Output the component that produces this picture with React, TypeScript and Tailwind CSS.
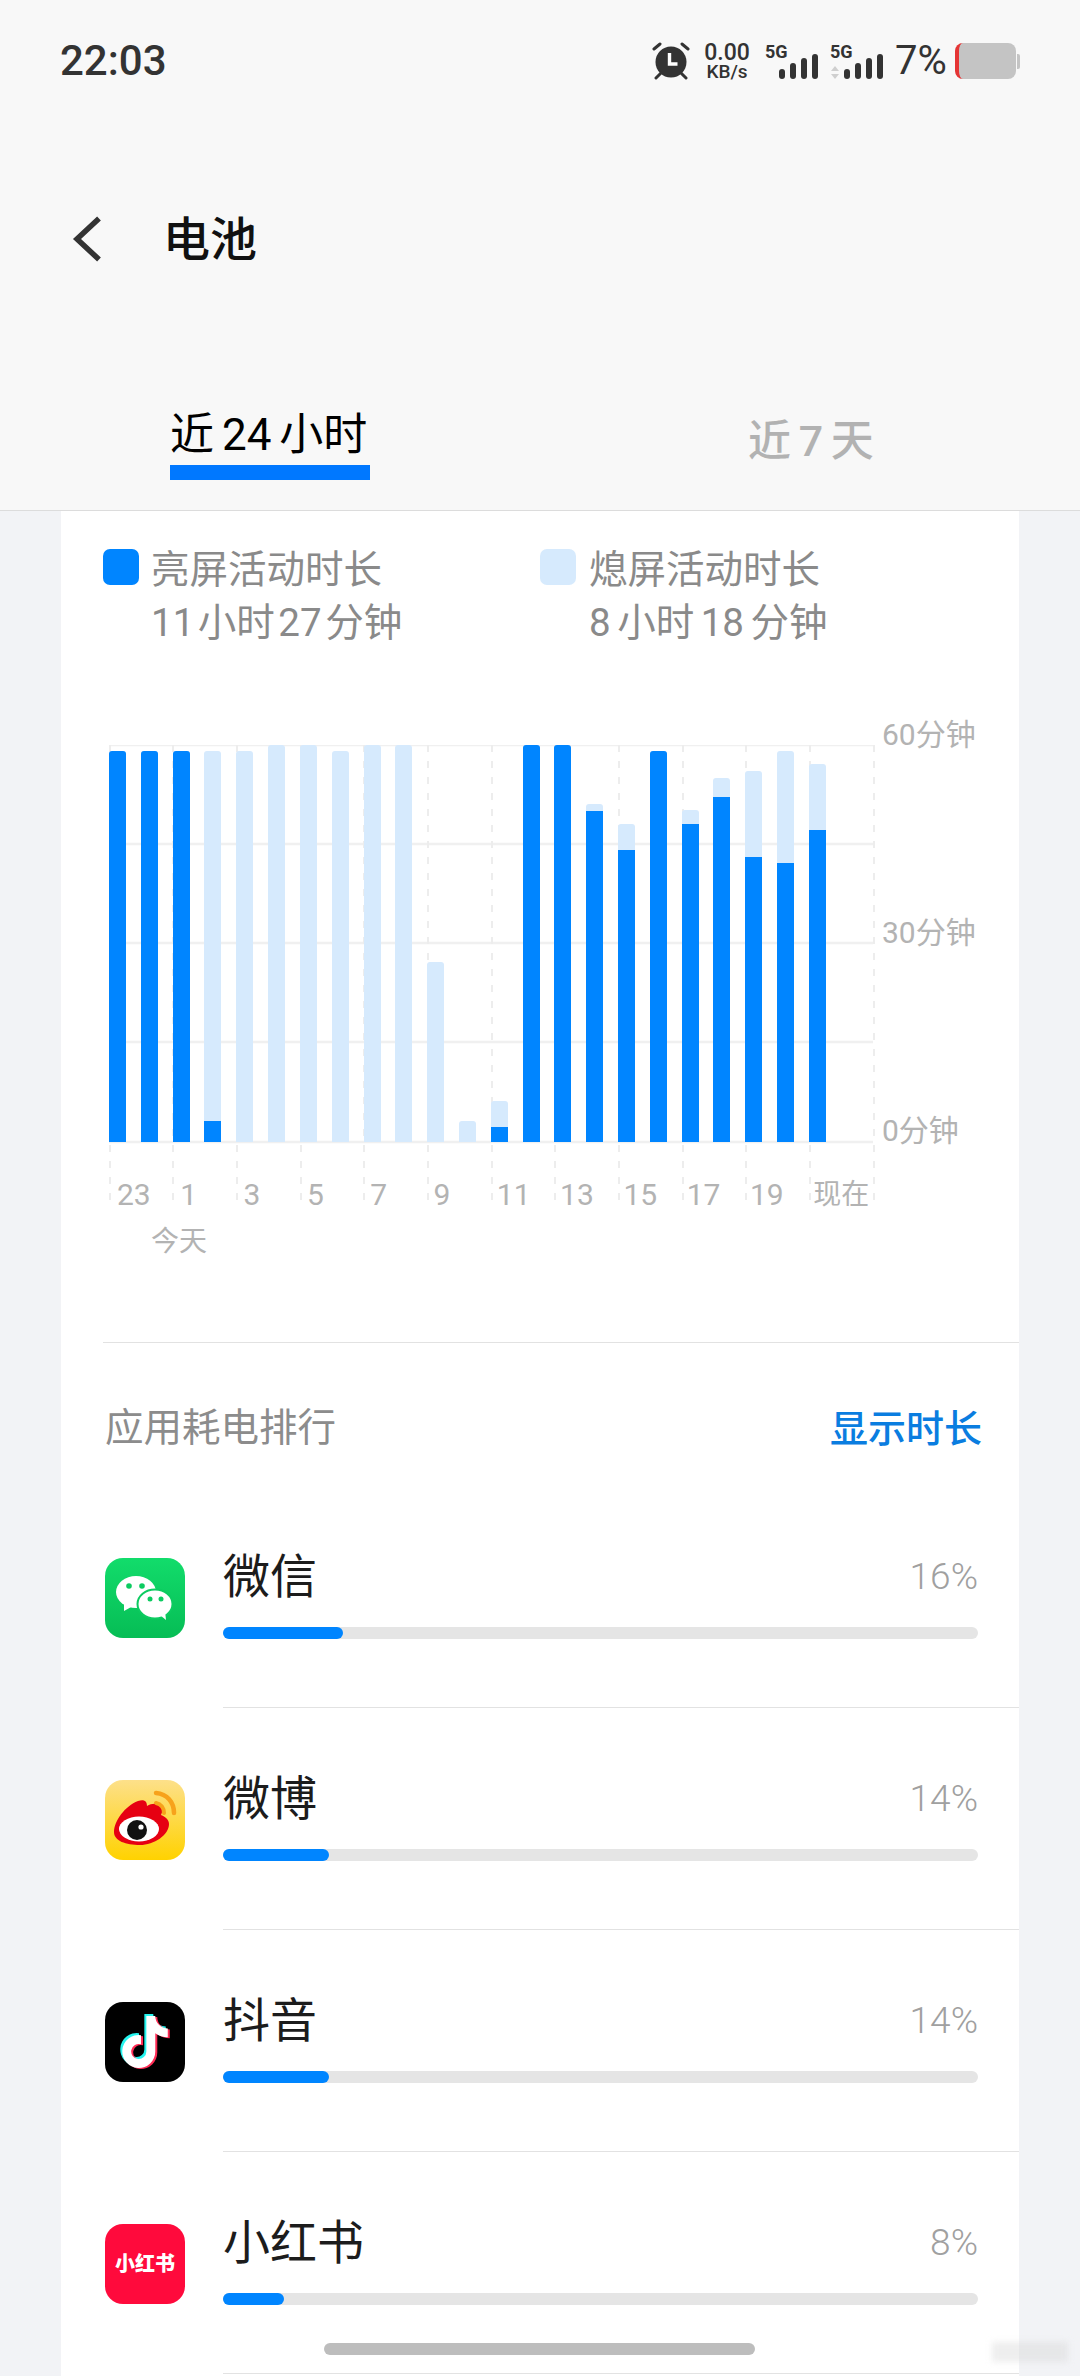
import { FaTiktok } from "react-icons/fa";

const BASE = 1142;

const bars = [
  { blue: 751, light: 751 },
  { blue: 751, light: 751 },
  { blue: 751, light: 751 },
  { blue: 1121, light: 751 },
  { blue: 1142, light: 751 },
  { blue: 1142, light: 745 },
  { blue: 1142, light: 745 },
  { blue: 1142, light: 751 },
  { blue: 1142, light: 745 },
  { blue: 1142, light: 745 },
  { blue: 1142, light: 962 },
  { blue: 1142, light: 1121 },
  { blue: 1127, light: 1101 },
  { blue: 745, light: 745 },
  { blue: 745, light: 745 },
  { blue: 811, light: 804 },
  { blue: 850, light: 824 },
  { blue: 751, light: 751 },
  { blue: 824, light: 810 },
  { blue: 797, light: 778 },
  { blue: 857, light: 771 },
  { blue: 863, light: 751 },
  { blue: 830, light: 764 },
];

const ticks = [109, 172, 236, 300, 363, 427, 491, 554, 618, 682, 745, 809, 873];
const xLabels = ["23", "1", "3", "5", "7", "9", "11", "13", "15", "17", "19"];
const yLabels = ["60分钟", "30分钟", "0分钟"];

const apps = [
  { name: "微信", pct: "16%", fill: 120, icon: <WechatIcon /> },
  { name: "微博", pct: "14%", fill: 106, icon: <WeiboIcon /> },
  { name: "抖音", pct: "14%", fill: 106, icon: <DouyinIcon /> },
  { name: "小红书", pct: "8%", fill: 61, icon: <RedbookIcon /> },
];

function WechatIcon() {
  return (
    <svg viewBox="0 0 80 80" className="w-20 h-20">
      <defs>
        <linearGradient id="wx" x1="0" y1="0" x2="0" y2="1">
          <stop offset="0" stopColor="#12dc6b" />
          <stop offset="1" stopColor="#06bd55" />
        </linearGradient>
      </defs>
      <rect width="80" height="80" rx="18" fill="url(#wx)" />
      <ellipse cx="31" cy="34" rx="20" ry="16" fill="#fff" />
      <path d="M19 44l0 9 9-5z" fill="#fff" />
      <ellipse cx="50" cy="46" rx="17.5" ry="14.5" fill="#fff" stroke="#0ccb60" strokeWidth="2" />
      <path d="M55 57l6 5-1-9z" fill="#fff" />
      <circle cx="24" cy="28" r="2.8" fill="#0ccb60" />
      <circle cx="37" cy="28" r="2.8" fill="#0ccb60" />
      <circle cx="45" cy="41" r="2.5" fill="#0ccb60" />
      <circle cx="56" cy="41" r="2.5" fill="#0ccb60" />
    </svg>
  );
}

function WeiboIcon() {
  return (
    <svg viewBox="0 0 80 80" className="w-20 h-20">
      <defs>
        <linearGradient id="wb" x1="0" y1="0" x2="0" y2="1">
          <stop offset="0" stopColor="#fde08a" />
          <stop offset="1" stopColor="#ffd200" />
        </linearGradient>
      </defs>
      <rect width="80" height="80" rx="18" fill="url(#wb)" />
      <path d="M9 52c0-11 11-26 24-31 6-2 9 0 9 5 5-3 12-3 14 1 2 3 1 6 0 8 5 2 8 5 8 9 0 11-15 21-29 21C21 65 9 61 9 52z" fill="#e60012" />
      <ellipse cx="34" cy="49" rx="20" ry="12.5" fill="#fff" />
      <circle cx="32" cy="50" r="10" fill="#111" />
      <circle cx="36" cy="47" r="2.6" fill="#fff" />
      <path d="M51 13c11 1 18 9 18 20" stroke="#f7a21b" strokeWidth="4.5" fill="none" strokeLinecap="round" />
      <path d="M51 23c5 1 8 5 8 10" stroke="#f7a21b" strokeWidth="4" fill="none" strokeLinecap="round" />
    </svg>
  );
}

function DouyinIcon() {
  return (
    <div className="relative w-20 h-20 rounded-[18px] bg-black">
      <FaTiktok className="absolute left-[15px] top-[12px] w-[46px] h-[52px] text-[#25f4ee]" />
      <FaTiktok className="absolute left-[19px] top-[15px] w-[46px] h-[52px] text-[#fe2c55]" />
      <FaTiktok className="absolute left-[17px] top-[13.5px] w-[46px] h-[52px] text-white" />
    </div>
  );
}

function RedbookIcon() {
  return (
    <div className="w-20 h-20 rounded-[18px] bg-[#ff0a3c] flex items-center justify-center">
      <span className="text-[20px] leading-none font-black text-white">小红书</span>
    </div>
  );
}

function AlarmIcon() {
  return (
    <svg viewBox="0 0 38 38" className="w-[38px] h-[38px]">
      <circle cx="19" cy="20" r="15.5" fill="#333" />
      <path d="M17.5 11v11h8" stroke="#fff" strokeWidth="3.4" fill="none" />
      <path d="M2 7l6-5M36 7l-6-5" stroke="#333" strokeWidth="3" strokeLinecap="round" />
      <path d="M4 36l5-5M34 36l-5-5" stroke="#333" strokeWidth="3" strokeLinecap="round" />
    </svg>
  );
}

function Signal() {
  return (
    <div className="flex items-end gap-[5px] h-[25px]">
      <div className="w-[6px] h-[10px] rounded-[3px] bg-[#333]" />
      <div className="w-[6px] h-[16px] rounded-[3px] bg-[#333]" />
      <div className="w-[6px] h-[21px] rounded-[3px] bg-[#333]" />
      <div className="w-[6px] h-[25px] rounded-[3px] bg-[#333]" />
    </div>
  );
}

function StatusBar() {
  return (
    <div className="h-[122px] pl-[60px] pr-[60px] flex items-center justify-between text-[#333]">
      <span className="text-[42px] leading-none font-medium">22:03</span>
      <div className="flex items-center h-[38px]">
        <AlarmIcon />
        <div className="ml-[13px] w-[48px] flex flex-col items-center font-medium">
          <span className="text-[23px] leading-[21px]">0.00</span>
          <span className="text-[19px] leading-[17px]">KB/s</span>
        </div>
        <div className="ml-[14px] relative w-[54px] h-[36px]">
          <span className="absolute left-0 top-0 text-[18px] leading-none font-bold">5G</span>
          <div className="absolute left-[14px] bottom-0">
            <Signal />
          </div>
        </div>
        <div className="ml-[11px] relative w-[53px] h-[36px]">
          <span className="absolute left-0 top-0 text-[18px] leading-none font-bold">5G</span>
          <svg viewBox="0 0 8 13" className="absolute left-[1px] bottom-0 w-[8px] h-[13px]">
            <path d="M4 0l4 5H0zM4 13L0 8h8z" fill="#cfcfcf" />
          </svg>
          <div className="absolute left-[14px] bottom-0">
            <Signal />
          </div>
        </div>
        <span className="ml-[12px] w-[51px] text-[40px] leading-none">7%</span>
        <div className="ml-[9px] flex items-center">
          <div className="w-[61px] h-[36px] rounded-[8px] bg-[#c4c4c4] border-l-[4px] border-[#e53535]" />
          <div className="ml-px w-[3px] h-[15px] rounded-r-[2px] bg-[#c4c4c4]" />
        </div>
      </div>
    </div>
  );
}

function Header() {
  return (
    <div className="h-[511px] shrink-0 bg-[#f8f8f8] border-b border-[#dcdcdc] flex flex-col">
      <StatusBar />
      <div className="mt-[93px] h-[48px] pl-[72px] flex items-center">
        <svg viewBox="0 0 30 46" className="w-[30px] h-[46px]">
          <path d="M27 2.5L5 23l22 20.5" stroke="#333" strokeWidth="5.5" fill="none" />
        </svg>
        <span className="ml-[61px] text-[47px] leading-none font-medium text-[#111]">电池</span>
      </div>
      <div className="mt-[148px] flex items-start">
        <div className="ml-[170px] w-[200px] flex flex-col">
          <span className="text-[44px] leading-[48px] text-black whitespace-nowrap [word-spacing:-3px]">近 24 小时</span>
          <div className="mt-[6px] h-[15px] bg-[#0078ff]" />
        </div>
        <span className="ml-[378px] mt-[6px] text-[43px] leading-[48px] font-medium text-[#b2b2b2] whitespace-nowrap [word-spacing:-3px]">近 7 天</span>
      </div>
    </div>
  );
}

function Legend() {
  return (
    <div className="pt-[38px] pl-[42px] flex">
      <div className="w-[437px] flex">
        <div className="w-[36px] h-[36px] rounded-[7px] bg-[#0085ff]" />
        <div className="ml-[12px] mt-[-6px] text-[#8a8a8a] text-[38.5px] leading-[53px]">
          <div>亮屏活动时长</div>
          <div className="whitespace-nowrap [word-spacing:-6px]">11 小时 27 分钟</div>
        </div>
      </div>
      <div className="flex">
        <div className="w-[36px] h-[36px] rounded-[7px] bg-[#d6eafd]" />
        <div className="ml-[13px] mt-[-6px] text-[#8a8a8a] text-[38.5px] leading-[53px]">
          <div>熄屏活动时长</div>
          <div className="whitespace-nowrap [word-spacing:-3px]">8 小时 18 分钟</div>
        </div>
      </div>
    </div>
  );
}

function Chart() {
  return (
    <div className="relative ml-[48px] mt-[96px] h-[597px] text-[#b3b3b3] text-[30px]">
      {/* grid lines, origin at x=109 y=745 */}
      <svg className="absolute left-0 top-0 w-[780px] h-[470px]" viewBox="0 0 780 470">
        {[0, 99, 198, 297, 397].map((y) => (
          <line key={y} x1="0" x2="764" y1={y} y2={y} stroke="#f0f0f0" strokeWidth="2.5" />
        ))}
        {ticks.map((x) => (
          <line key={x} x1={x - 109 + 1} x2={x - 109 + 1} y1="0" y2="458" stroke="#ededed" strokeWidth="2" strokeDasharray="7 9" />
        ))}
      </svg>

      <div className="absolute left-0 top-0 w-[717px] h-[397px] flex justify-between items-end">
        {bars.map((b, i) => (
          <div
            key={i}
            className="relative w-[17px] rounded-t-[3px] overflow-hidden bg-[#d6eafd]"
            style={{ height: BASE - b.light }}
          >
            <div className="absolute left-0 bottom-0 w-full bg-[#0085ff]" style={{ height: BASE - b.blue }} />
          </div>
        ))}
      </div>

      <div className="absolute left-[773px] top-[-30px] h-[436px] flex flex-col justify-between leading-[40px] whitespace-nowrap">
        {yLabels.map((l) => (
          <span key={l}>{l}</span>
        ))}
      </div>

      <div className="absolute left-[8px] top-[430px] flex leading-[40px]">
        {xLabels.map((l) => (
          <span key={l} className="w-[63.3px] shrink-0 whitespace-nowrap">{l}</span>
        ))}
        <span className="text-[28px] whitespace-nowrap">现在</span>
      </div>
      <span className="absolute left-[42px] top-[477px] text-[28px] leading-[40px]">今天</span>
    </div>
  );
}

function AppRow({ app }: { app: (typeof apps)[number] }) {
  return (
    <div className="h-[222px] flex">
      <div className="pt-[72px] pl-[44px] shrink-0">{app.icon}</div>
      <div className="ml-[38px] flex-1 border-b border-[#e2e2e2] flex flex-col">
        <div className="mt-[58px] h-[64px] pr-[41px] flex items-center justify-between">
          <span className="text-[47px] leading-none text-[#1c1c1c]">{app.name}</span>
          <span className="text-[37px] leading-none font-light text-[#a0a0a0]">{app.pct}</span>
        </div>
        <div className="mt-[19px] mr-[41px] h-[12px] rounded-full bg-[#e5e5e5]">
          <div className="h-full rounded-full bg-[#0085ff]" style={{ width: app.fill }} />
        </div>
      </div>
    </div>
  );
}

export default function App() {
  return (
    <div className="relative w-[1080px] h-[2376px] overflow-hidden flex flex-col bg-[#f2f3f6] font-['Roboto','Noto_Sans_CJK_SC',sans-serif]">
      <Header />
      <div className="mx-[61px] flex-1 bg-white">
        <Legend />
        <Chart />
        <div className="ml-[42px] border-t border-[#e2e2e2]" />
        <div className="h-[143px] pt-[28px] pl-[44px] pr-[37px] flex items-center justify-between">
          <span className="text-[38.5px] leading-none text-[#8c8c8c]">应用耗电排行</span>
          <span className="text-[38px] leading-none font-medium text-[#0a7de0]">显示时长</span>
        </div>
        {apps.map((a) => (
          <AppRow key={a.name} app={a} />
        ))}
      </div>
      {/* gesture bar */}
      <div className="absolute left-[324px] top-[2343px] w-[431px] h-[12px] rounded-full bg-[#bdbdbd]" />
      {/* faint watermark smudge, bottom right */}
      <div className="absolute left-[992px] top-[2342px] w-[76px] h-[20px] bg-[#d4d4d4]/40 blur-[3px]" />
    </div>
  );
}
